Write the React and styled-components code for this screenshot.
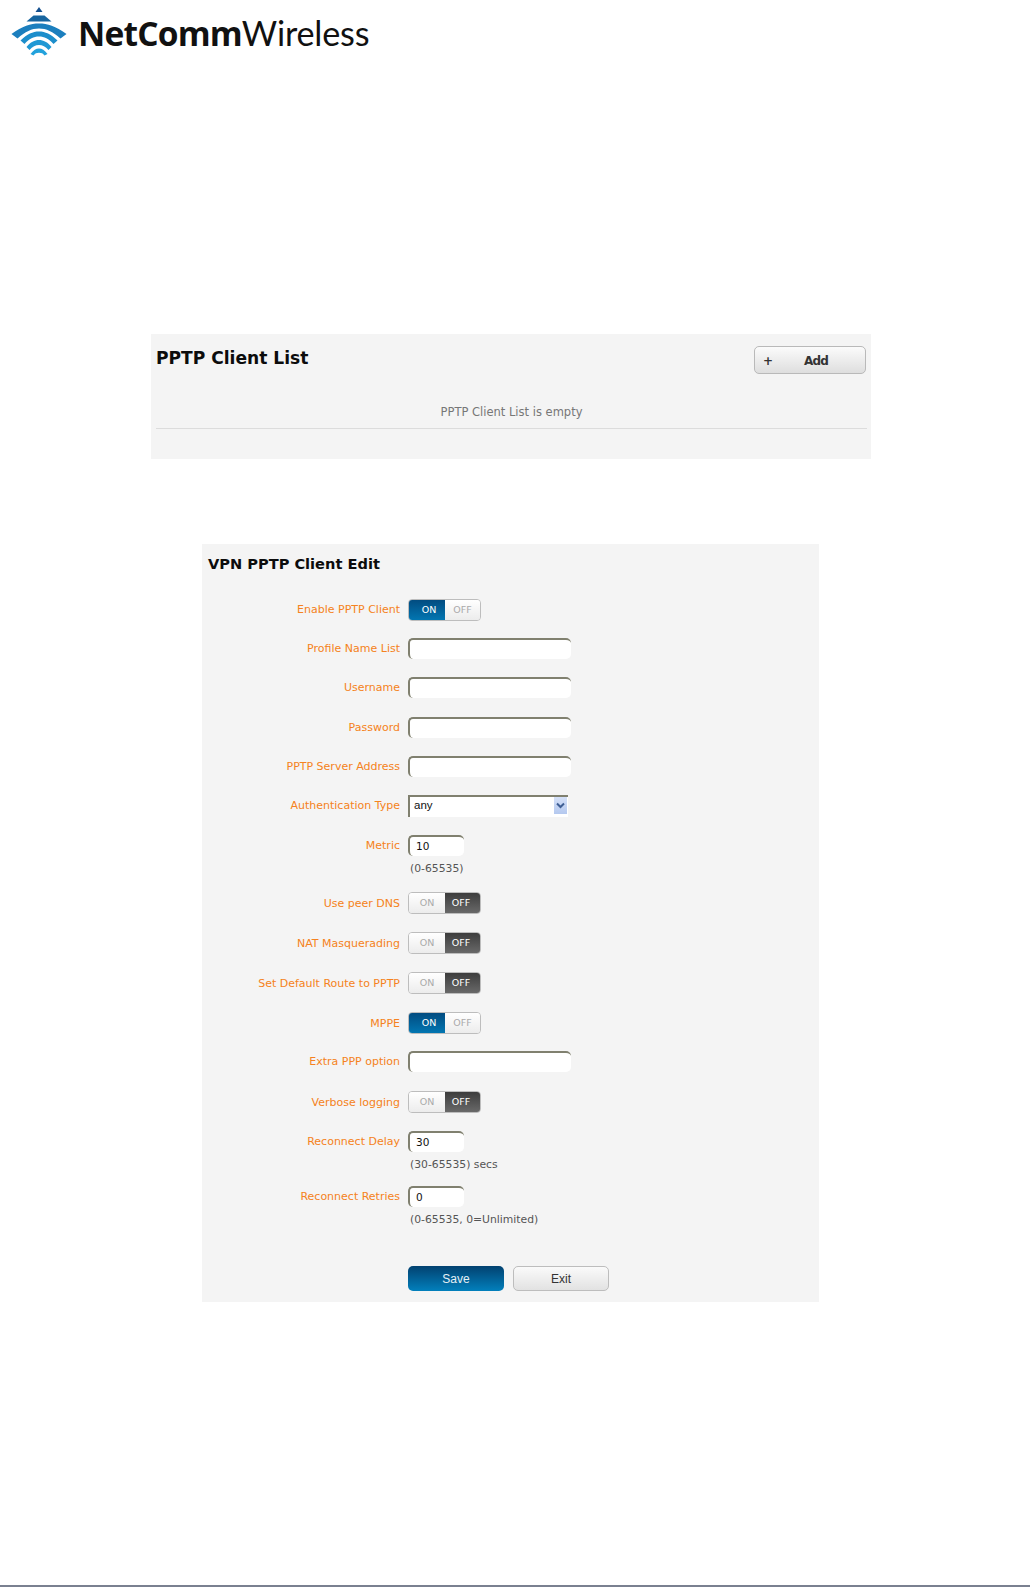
import React from "react";
import styled, { createGlobalStyle, css } from "styled-components";

const Global = createGlobalStyle`
  html, body {
    margin: 0;
    padding: 0;
    background: #fff;
  }
  body {
    font-family: "DejaVu Sans", Verdana, sans-serif;
  }
`;

const Page = styled.div`
  width: 1030px;
  height: 1587px;
  display: flex;
  flex-direction: column;
  box-sizing: border-box;
  overflow: hidden;
`;

const Header = styled.div`
  display: flex;
  align-items: center;
  height: 64px;
  padding-left: 11px;
  gap: 10px;
`;

const LogoText = styled.div`
  font-family: Lato, "Open Sans", sans-serif;
  font-size: 34.2px;
  color: #111;
  letter-spacing: -0.2px;
  line-height: 40px;
  margin-top: 1px;
  b {
    font-weight: 700;
    font-family: "Open Sans", sans-serif;
    font-size: 33.5px;
    letter-spacing: -0.8px;
  }
`;

const ListPanel = styled.section`
  width: 720px;
  height: 125px;
  margin: 270px 0 0 151px;
  padding: 12px 4px 0 5px;
  box-sizing: border-box;
  background: #f4f4f4;
  flex: none;
`;

const ListHead = styled.div`
  display: flex;
  justify-content: space-between;
  align-items: flex-start;
  height: 58px;
  padding-right: 1px;
`;

const Title = styled.h2`
  margin: 0;
  font-size: 17.1px;
  line-height: 24px;
  font-weight: 700;
  color: #0c0c0c;
`;

const AddButton = styled.button`
  width: 112px;
  height: 28px;
  padding: 1px 37px 0 8px;
  display: flex;
  align-items: center;
  justify-content: space-between;
  box-sizing: border-box;
  border: 1px solid #b9b9b9;
  border-radius: 5px;
  background: linear-gradient(#fbfbfb, #dedede);
  font-family: "DejaVu Sans", sans-serif;
  font-size: 12px;
  font-weight: 700;
  letter-spacing: -0.8px;
  color: #333;
`;

const EmptyText = styled.div`
  text-align: center;
  font-size: 11.5px;
  line-height: 14px;
  height: 23px;
  padding-top: 1px;
  color: #777;
  border-bottom: 1px solid #dcdcdc;
`;

const EditPanel = styled.section`
  width: 617px;
  height: 758px;
  margin: 85px 0 0 202px;
  padding: 8px 5px 0;
  box-sizing: border-box;
  background: #f4f4f4;
  flex: none;
`;

const EditTitle = styled(Title)`
  font-size: 14.6px;
  height: 24px;
  margin-bottom: 14px;
  padding-left: 1px;
`;

const Row = styled.div`
  display: grid;
  grid-template-columns: 193px auto;
  column-gap: 8px;
  align-items: center;
  justify-content: start;
  height: ${(p) => p.$h || 39.2}px;
  margin-top: ${(p) => p.$top || 0}px;
`;

const Label = styled.label`
  text-align: right;
  font-size: 11px;
  line-height: 14px;
  padding-top: 1px;
  color: #f58220;
  white-space: nowrap;
`;

const SwitchBox = styled.div`
  display: flex;
  width: 73px;
  height: 22px;
  box-sizing: border-box;
  border-radius: 4px;
  overflow: hidden;
  border: 1px solid #bdbdbd;
  font-size: 9.5px;
  line-height: 20px;
  text-align: center;
`;

const Half = styled.span`
  width: 36px;
  flex: none;
  box-sizing: border-box;
  &:last-child {
    flex: 1;
  }
  ${(p) =>
    p.$tone === "blue" &&
    css`
      background: linear-gradient(#024a7e, #0278b4);
      color: #fff;
      margin: -1px 0 -1px -1px;
      padding: 1px 0 1px 5px;
      width: 37px;
    `}
  ${(p) =>
    p.$tone === "dark" &&
    css`
      background: linear-gradient(#3b3b3b, #6b6b6b);
      color: #fff;
      margin: -1px -1px -1px 0;
      padding: 1px 4px 1px 0;
    `}
  ${(p) =>
    !p.$tone &&
    css`
      background: linear-gradient(#fff, #ececec);
      color: #aaa;
    `}
`;

const Switch = ({ on }) => (
  <SwitchBox>
    <Half $tone={on ? "blue" : undefined}>ON</Half>
    <Half $tone={on ? undefined : "dark"}>OFF</Half>
  </SwitchBox>
);

const fieldLook = css`
  box-sizing: border-box;
  height: 21px;
  border: 0;
  border-top: 2px solid #80806f;
  border-left: 2px solid #80806f;
  border-radius: 5px;
  background: #fff;
  outline: none;
  color: #111;
`;

const TextInput = styled.input`
  ${fieldLook}
  display: block;
  width: ${(p) => p.$w || 163}px;
  padding: 0 0 0 6px;
  font-family: "DejaVu Sans", sans-serif;
  font-size: 10.5px;
`;

const SelectBox = styled.div`
  ${fieldLook}
  width: 160px;
  height: 22px;
  border-radius: 0;
  display: flex;
  align-items: center;
  justify-content: space-between;
  padding: 0 1px 3px 4px;
  font-family: "Liberation Sans", sans-serif;
  font-size: 11.5px;
`;

const SelectArrow = styled.span`
  width: 13px;
  height: 17px;
  display: flex;
  align-items: center;
  justify-content: center;
  background: linear-gradient(#d5e1f8, #b4c8ef);
`;

const Hint = styled.div`
  box-sizing: border-box;
  margin-left: 201px;
  padding: 2px 0 0 2px;
  font-size: 10.8px;
  line-height: 14px;
  height: 14px;
  color: #555;
`;

const Spacer = styled.div`
  height: ${(p) => p.$h}px;
`;

const Buttons = styled.div`
  display: flex;
  gap: 9px;
  margin: 0 0 0 201px;
`;

const Button = styled.button`
  width: 96px;
  height: 25px;
  padding: 0;
  box-sizing: border-box;
  border-radius: 5px;
  font-family: "Liberation Sans", sans-serif;
  font-size: 12px;
  ${(p) =>
    p.$primary
      ? css`
          border: 0;
          color: #e6f0f6;
          background: linear-gradient(#024170, #0280bc);
        `
      : css`
          border: 1px solid #bdbdbd;
          color: #333;
          background: linear-gradient(#fafafa, #e2e2e2);
        `}
`;

const FooterRule = styled.div`
  margin-top: auto;
  height: 2px;
  background: #7a8090;
  flex: none;
`;

const Logo = () => (
  <svg width="57" height="52" viewBox="10.5 6 57 52">
    <path d="M38.5 7 L42 12 H35 Z" fill="#14508f" />
    <path d="M33 15.5 H44 L51 21.5 H26 Z" fill="#17659f" />
    <path d="M11 34 C22 26 30 23.5 38.5 23.5 C47 23.5 55 26 66 34 L60 38.5 C52 31.5 46 28.5 38.5 28.5 C31 28.5 25 31.5 17 38.5 Z" fill="#1c7fbe" />
    <path d="M20 40.5 C27 34 32 31.5 38.5 31.5 C45 31.5 50 34 57 40.5 L53 44 C48 38.5 44 36.5 38.5 36.5 C33 36.5 29 38.5 24 44 Z" fill="#1d8ecb" />
    <path d="M26 47 C30 42 34 40 38.5 40 C43 40 47 42 51 47 L48 50 C45 46.5 42 45 38.5 45 C35 45 32 46.5 29 50 Z" fill="#1f98d4" />
    <path d="M30 54 C33 50 35.5 48.5 38.5 48.5 C41.5 48.5 44 50 47 54 L44 55.5 C42.5 53.5 41 52.8 38.5 52.8 C36 52.8 34.5 53.5 33 55.5 Z" fill="#23a2dc" />
  </svg>
);

const Field = ({ label, h, top, children }) => (
  <Row $h={h} $top={top}>
    <Label>{label}</Label>
    {children}
  </Row>
);

export default function App() {
  return (
    <Page>
      <Global />
      <Header>
        <Logo />
        <LogoText>
          <b>NetComm</b>Wireless
        </LogoText>
      </Header>

      <ListPanel>
        <ListHead>
          <Title>PPTP Client List</Title>
          <AddButton>
            <span>+</span>
            <span>Add</span>
          </AddButton>
        </ListHead>
        <EmptyText>PPTP Client List is empty</EmptyText>
      </ListPanel>

      <EditPanel>
        <EditTitle>VPN PPTP Client Edit</EditTitle>
        <Field label="Enable PPTP Client"><Switch on /></Field>
        <Field label="Profile Name List"><TextInput readOnly /></Field>
        <Field label="Username"><TextInput readOnly /></Field>
        <Field label="Password"><TextInput readOnly /></Field>
        <Field label="PPTP Server Address"><TextInput readOnly /></Field>
        <Field label="Authentication Type">
          <SelectBox>
            any
            <SelectArrow>
              <svg width="9" height="7" viewBox="0 0 9 7">
                <path d="M1 1.5 L4.5 5 L8 1.5" fill="none" stroke="#3f5f94" strokeWidth="2" />
              </svg>
            </SelectArrow>
          </SelectBox>
        </Field>
        <Field label="Metric" h={30} top={5}><TextInput readOnly $w={56} value="10" /></Field>
        <Hint>(0-65535)</Hint>
        <Spacer $h={9} />
        <Field label="Use peer DNS" h={40}><Switch /></Field>
        <Field label="NAT Masquerading" h={40}><Switch /></Field>
        <Field label="Set Default Route to PPTP" h={40}><Switch /></Field>
        <Field label="MPPE" h={40}><Switch on /></Field>
        <Field label="Extra PPP option" h={36}><TextInput readOnly /></Field>
        <Field label="Verbose logging" h={40} top={3}><Switch /></Field>
        <Field label="Reconnect Delay" h={30} top={4}><TextInput readOnly $w={56} value="30" /></Field>
        <Hint>(30-65535) secs</Hint>
        <Spacer $h={11} />
        <Field label="Reconnect Retries" h={30}><TextInput readOnly $w={56} value="0" /></Field>
        <Hint>(0-65535, 0=Unlimited)</Hint>
        <Spacer $h={41} />
        <Buttons>
          <Button $primary>Save</Button>
          <Button>Exit</Button>
        </Buttons>
      </EditPanel>

      <FooterRule />
    </Page>
  );
}
